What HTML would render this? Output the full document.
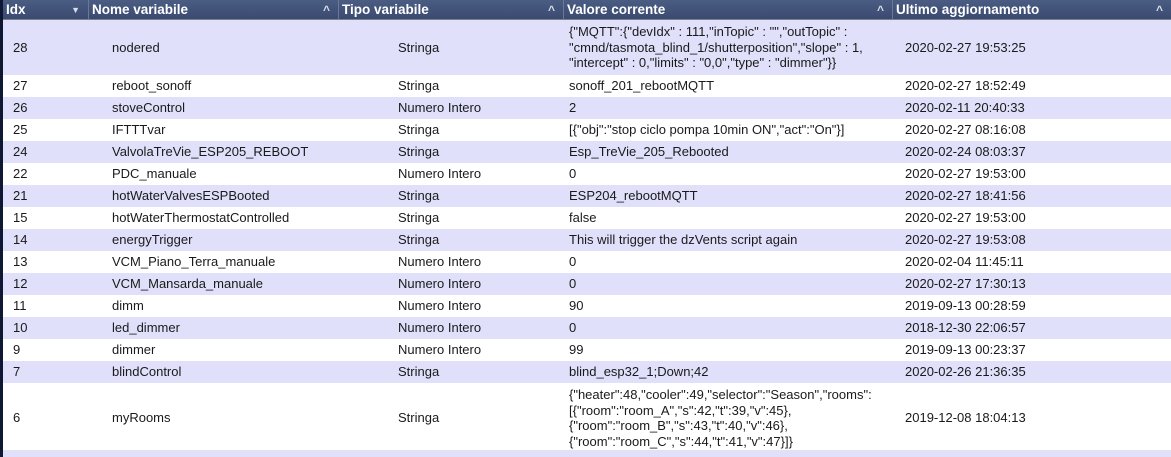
<!DOCTYPE html>
<html><head><meta charset="utf-8"><style>
*{margin:0;padding:0;box-sizing:border-box}
body{width:1171px;height:457px;overflow:hidden;background:#e0e0fb;font-family:"Liberation Sans",Arial,sans-serif;font-size:13px;color:#1a1a1a;position:relative}
.strip{position:absolute;left:0;top:0;width:3px;height:457px;background:#0e1833;z-index:5}
.hdr{position:absolute;left:3px;top:0;width:1168px;height:20px;background:linear-gradient(#4b5d84,#3a4a6f);border-bottom:1px solid #7a7f8a;color:#fff;font-weight:bold;font-size:13.5px}
.hdr div{position:absolute;top:0;height:19px;line-height:19px;padding-left:3px;border-right:1px solid #6c7896}
.hdr span{position:absolute;right:8px;top:1px;font-size:12px;color:#d8dce6;font-weight:bold}
.row{position:absolute;left:3px;width:1168px}
.row div{position:absolute;top:0;height:100%;display:flex;align-items:center;line-height:15.5px}
.a{background:#e0e0fb}.b{background:#fff}
.c1{left:10px}.c2{left:109px}.c3{left:395px}.c4{left:566px}.c5{left:902px}
</style></head><body>
<div class="strip"></div>
<div class="hdr">
<div style="left:0;width:86px">Idx<span style="font-size:9px">▼</span></div>
<div style="left:86px;width:250px">Nome variabile<span>^</span></div>
<div style="left:336px;width:225px">Tipo variabile<span>^</span></div>
<div style="left:561px;width:329px">Valore corrente<span>^</span></div>
<div style="left:890px;width:278px;border-right:none">Ultimo aggiornamento<span>^</span></div>
</div>
<div class="row a" style="top:20px;height:55px"><div class="c1">28</div><div class="c2">nodered</div><div class="c3">Stringa</div><div class="c4">{"MQTT":{"devIdx" : 111,"inTopic" : "","outTopic" :<br>"cmnd/tasmota_blind_1/shutterposition","slope" : 1,<br>"intercept" : 0,"limits" : "0,0","type" : "dimmer"}}</div><div class="c5">2020-02-27 19:53:25</div></div>
<div class="row b" style="top:75px;height:22px"><div class="c1">27</div><div class="c2">reboot_sonoff</div><div class="c3">Stringa</div><div class="c4">sonoff_201_rebootMQTT</div><div class="c5">2020-02-27 18:52:49</div></div>
<div class="row a" style="top:97px;height:22px"><div class="c1">26</div><div class="c2">stoveControl</div><div class="c3">Numero Intero</div><div class="c4">2</div><div class="c5">2020-02-11 20:40:33</div></div>
<div class="row b" style="top:119px;height:22px"><div class="c1">25</div><div class="c2">IFTTTvar</div><div class="c3">Stringa</div><div class="c4">[{"obj":"stop ciclo pompa 10min ON","act":"On"}]</div><div class="c5">2020-02-27 08:16:08</div></div>
<div class="row a" style="top:141px;height:22px"><div class="c1">24</div><div class="c2">ValvolaTreVie_ESP205_REBOOT</div><div class="c3">Stringa</div><div class="c4">Esp_TreVie_205_Rebooted</div><div class="c5">2020-02-24 08:03:37</div></div>
<div class="row b" style="top:163px;height:22px"><div class="c1">22</div><div class="c2">PDC_manuale</div><div class="c3">Numero Intero</div><div class="c4">0</div><div class="c5">2020-02-27 19:53:00</div></div>
<div class="row a" style="top:185px;height:22px"><div class="c1">21</div><div class="c2">hotWaterValvesESPBooted</div><div class="c3">Stringa</div><div class="c4">ESP204_rebootMQTT</div><div class="c5">2020-02-27 18:41:56</div></div>
<div class="row b" style="top:207px;height:22px"><div class="c1">15</div><div class="c2">hotWaterThermostatControlled</div><div class="c3">Stringa</div><div class="c4">false</div><div class="c5">2020-02-27 19:53:00</div></div>
<div class="row a" style="top:229px;height:22px"><div class="c1">14</div><div class="c2">energyTrigger</div><div class="c3">Stringa</div><div class="c4">This will trigger the dzVents script again</div><div class="c5">2020-02-27 19:53:08</div></div>
<div class="row b" style="top:251px;height:22px"><div class="c1">13</div><div class="c2">VCM_Piano_Terra_manuale</div><div class="c3">Numero Intero</div><div class="c4">0</div><div class="c5">2020-02-04 11:45:11</div></div>
<div class="row a" style="top:273px;height:22px"><div class="c1">12</div><div class="c2">VCM_Mansarda_manuale</div><div class="c3">Numero Intero</div><div class="c4">0</div><div class="c5">2020-02-27 17:30:13</div></div>
<div class="row b" style="top:295px;height:22px"><div class="c1">11</div><div class="c2">dimm</div><div class="c3">Numero Intero</div><div class="c4">90</div><div class="c5">2019-09-13 00:28:59</div></div>
<div class="row a" style="top:317px;height:22px"><div class="c1">10</div><div class="c2">led_dimmer</div><div class="c3">Numero Intero</div><div class="c4">0</div><div class="c5">2018-12-30 22:06:57</div></div>
<div class="row b" style="top:339px;height:22px"><div class="c1">9</div><div class="c2">dimmer</div><div class="c3">Numero Intero</div><div class="c4">99</div><div class="c5">2019-09-13 00:23:37</div></div>
<div class="row a" style="top:361px;height:22px"><div class="c1">7</div><div class="c2">blindControl</div><div class="c3">Stringa</div><div class="c4">blind_esp32_1;Down;42</div><div class="c5">2020-02-26 21:36:35</div></div>
<div class="row b" style="top:383px;height:67px"><div class="c1" style="padding-top:3px">6</div><div class="c2" style="padding-top:3px">myRooms</div><div class="c3" style="padding-top:3px">Stringa</div><div class="c4" style="padding-top:3px">{"heater":48,"cooler":49,"selector":"Season","rooms":<br>[{"room":"room_A","s":42,"t":39,"v":45},<br>{"room":"room_B","s":43,"t":40,"v":46},<br>{"room":"room_C","s":44,"t":41,"v":47}]}</div><div class="c5" style="padding-top:3px">2019-12-08 18:04:13</div></div>
<div class="row a" style="top:450px;height:7px"></div>
</body></html>
